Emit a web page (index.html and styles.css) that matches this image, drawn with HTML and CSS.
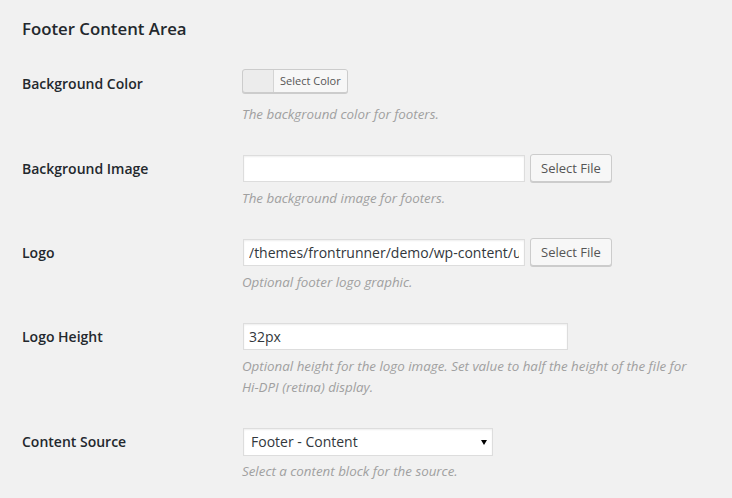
FILE: index.html
```html
<!DOCTYPE html>
<html lang="en">
<head>
<meta charset="utf-8">
<title>Footer Content Area</title>
<link rel="stylesheet" href="styles.css">
</head>
<body>
<div class="wrap">
  <h2 class="section-title">Footer Content Area</h2>
  <div class="form-table">
    <div class="row">
      <div class="label">Background Color</div>
      <div class="field">
        <button class="color-result" type="button"><span class="swatch"></span><span class="color-label">Select Color</span></button>
        <p class="description">The background color for footers.</p>
      </div>
    </div>
    <div class="row">
      <div class="label">Background Image</div>
      <div class="field">
        <div class="input-group">
          <input class="text-input file-input" type="text" value="">
          <button class="button" type="button">Select File</button>
        </div>
        <p class="description">The background image for footers.</p>
      </div>
    </div>
    <div class="row">
      <div class="label">Logo</div>
      <div class="field">
        <div class="input-group">
          <input class="text-input file-input" type="text" value="/themes/frontrunner/demo/wp-content/uploads/2015/logo.png">
          <button class="button" type="button">Select File</button>
        </div>
        <p class="description">Optional footer logo graphic.</p>
      </div>
    </div>
    <div class="row">
      <div class="label">Logo Height</div>
      <div class="field">
        <div class="input-group">
          <input class="text-input height-input" type="text" value="32px">
        </div>
        <p class="description">Optional height for the logo image. Set value to half the height of the file for <span class="nowrap">Hi-DPI</span> (retina) display.</p>
      </div>
    </div>
    <div class="row">
      <div class="label">Content Source</div>
      <div class="field">
        <div class="select-wrap">
          <select class="select">
            <option>Footer - Content</option>
          </select>
          <svg class="select-arrow" width="6" height="5" viewBox="0 0 6 5"><path d="M0 0H6L3 5Z" fill="#000"/></svg>
        </div>
        <p class="description">Select a content block for the source.</p>
      </div>
    </div>
  </div>
</div>
</body>
</html>
```

FILE: styles.css
```css
html, body {
  margin: 0;
  padding: 0;
  background: #f1f1f1;
}

body {
  font-family: "Open Sans", "Liberation Sans", sans-serif;
  color: #444;
  font-size: 13px;
}

.wrap {
  padding: 0 20px 0 22px;
}

.section-title {
  margin: 18px 0 0;
  font-size: 16.8px;
  font-weight: 600;
  line-height: 1.3;
  color: #23282d;
}

.form-table {
  margin-top: 14px;
}

.row {
  display: grid;
  grid-template-columns: 220px 1fr;
}

.label {
  padding: 21px 10px 20px 0;
  font-size: 14px;
  font-weight: 600;
  line-height: 1.3;
  color: #23282d;
}

.field {
  padding: 15px 10px 14px 0;
}

.description {
  margin: 11px 0 0;
  font-size: 13.35px;
  font-style: italic;
  line-height: 21px;
  color: #a0a0a0;
}

.input-group + .description,
.select-wrap + .description {
  margin-top: 5px;
}

.nowrap {
  white-space: nowrap;
}

.color-result {
  display: flex;
  box-sizing: border-box;
  height: 24px;
  margin: 0;
  padding: 0;
  border: 1px solid #ccc;
  border-radius: 3px;
  box-shadow: 0 1px 0 #ccc;
  background: #ececec;
  overflow: hidden;
  cursor: pointer;
  font-family: inherit;
}

.swatch {
  display: block;
  width: 30px;
  height: 22px;
}

.color-label {
  display: block;
  height: 22px;
  padding: 0 6px;
  border-left: 1px solid #d4d4d4;
  background: #f7f7f7;
  color: #555;
  font-size: 11px;
  line-height: 22px;
}

.input-group {
  display: flex;
  align-items: flex-start;
  gap: 4px;
}

.text-input {
  box-sizing: border-box;
  height: 27px;
  margin: 1px;
  padding: 2px 5px;
  border: 1px solid #ddd;
  box-shadow: inset 0 1px 2px rgba(0, 0, 0, 0.07);
  background: #fff;
  color: #32373c;
  font-family: inherit;
  font-size: 14px;
  outline: none;
}

.file-input {
  width: 282px;
}

.height-input {
  width: 325px;
}

.button {
  box-sizing: border-box;
  height: 28px;
  margin: 0;
  padding: 0 10px 1px;
  border: 1px solid #ccc;
  border-radius: 3px;
  box-shadow: 0 1px 0 #ccc;
  background: #f7f7f7;
  color: #555;
  font-family: inherit;
  font-size: 13px;
  line-height: 26px;
  cursor: pointer;
}

.select-wrap {
  position: relative;
  width: 252px;
}

.select {
  display: block;
  box-sizing: border-box;
  width: 250px;
  height: 28px;
  margin: 1px;
  padding: 2px 7px;
  border: 1px solid #ddd;
  border-radius: 0;
  box-shadow: inset 0 1px 2px rgba(0, 0, 0, 0.07);
  background: #fff;
  color: #32373c;
  font-family: inherit;
  font-size: 14px;
  -webkit-appearance: none;
  appearance: none;
  outline: none;
}

.select-arrow {
  position: absolute;
  left: 239px;
  top: 12px;
  pointer-events: none;
}
```
